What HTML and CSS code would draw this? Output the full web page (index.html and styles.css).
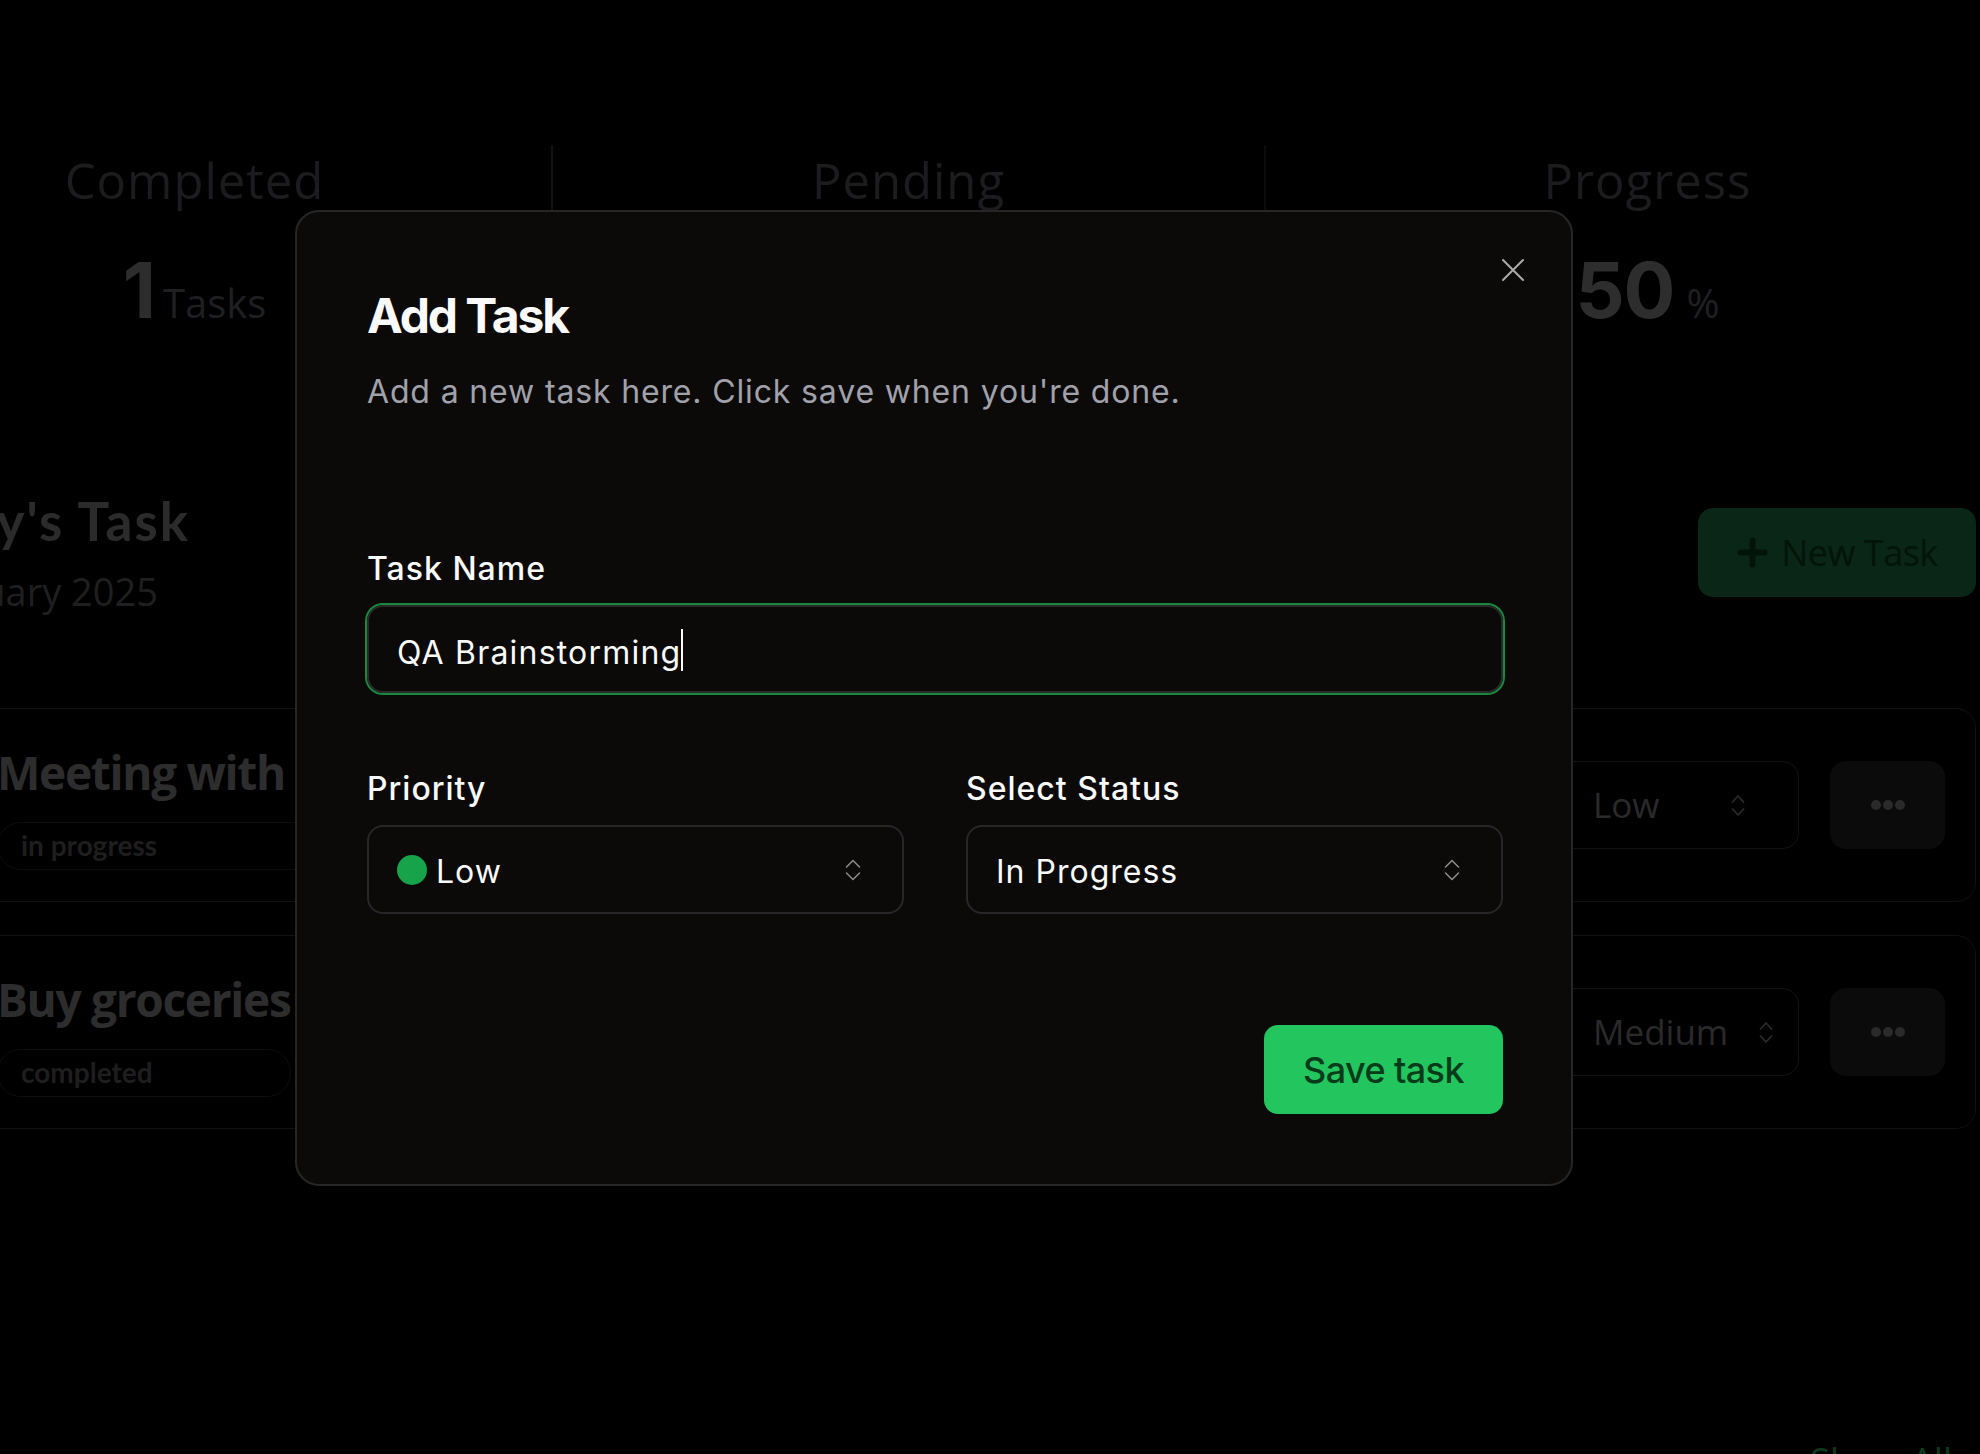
FILE: index.html
```html
<!DOCTYPE html>
<html lang="en">
<head>
<meta charset="utf-8">
<title>Tasks</title>
<link rel="stylesheet" href="styles.css">
</head>
<body>
<div class="page">
  <section class="stats">
    <div class="stat stat--first">
      <div class="stat-label">Completed</div>
      <div class="stat-value"><span class="stat-num">1</span><span class="stat-unit">Tasks</span></div>
    </div>
    <div class="stat stat--mid">
      <div class="stat-label">Pending</div>
      <div class="stat-value"><span class="stat-num">1</span><span class="stat-unit">Tasks</span></div>
    </div>
    <div class="stat stat--last">
      <div class="stat-label">Progress</div>
      <div class="stat-value stat-value--pct"><span class="stat-num">50</span><span class="stat-unit">%</span></div>
    </div>
  </section>

  <main class="main">
    <header class="tasks-header">
      <div class="tasks-heading">
        <h2 class="tasks-title">Today's Task</h2>
        <p class="tasks-date">Wednesday, 22 January 2025</p>
      </div>
      <button class="new-task" type="button">
        <svg class="plus" width="31" height="31" viewBox="0 0 31 31"><path d="M15.5 3.5v24M3.5 15.5h24" fill="none" stroke="currentColor" stroke-width="6" stroke-linecap="round"/></svg>
        <span>New Task</span>
      </button>
    </header>

    <ul class="task-list">
      <li class="task-card">
        <div class="task-info">
          <h3 class="task-name">Meeting with Team</h3>
          <span class="badge">in progress</span>
        </div>
        <div class="task-actions">
          <div class="prio-select"><span class="prio-text">Low</span>
            <svg width="14" height="23" viewBox="0 0 14 23"><path d="M1.5 8 7 2l5.5 6M1.5 15 7 21l5.5-6" fill="none" stroke="currentColor" stroke-width="1.8" stroke-linecap="round" stroke-linejoin="round"/></svg>
          </div>
          <button class="more" type="button"><svg width="34" height="10" viewBox="0 0 34 10"><circle cx="5" cy="5" r="5"/><circle cx="17" cy="5" r="5"/><circle cx="29" cy="5" r="5"/></svg></button>
        </div>
      </li>
      <li class="task-card">
        <div class="task-info">
          <h3 class="task-name">Buy groceries</h3>
          <span class="badge">completed</span>
        </div>
        <div class="task-actions">
          <div class="prio-select"><span class="prio-text">Medium</span>
            <svg width="14" height="23" viewBox="0 0 14 23"><path d="M1.5 8 7 2l5.5 6M1.5 15 7 21l5.5-6" fill="none" stroke="currentColor" stroke-width="1.8" stroke-linecap="round" stroke-linejoin="round"/></svg>
          </div>
          <button class="more" type="button"><svg width="34" height="10" viewBox="0 0 34 10"><circle cx="5" cy="5" r="5"/><circle cx="17" cy="5" r="5"/><circle cx="29" cy="5" r="5"/></svg></button>
        </div>
      </li>
    </ul>

    <div class="section-footer"><a class="show-all" href="#">Show All</a></div>
  </main>
</div>

<div class="dialog" role="dialog" aria-labelledby="dlg-title">
  <button class="dialog-close" type="button" aria-label="Close">
    <svg width="24" height="24" viewBox="0 0 24 24"><path d="M2 2l20 20M22 2 2 22" fill="none" stroke="currentColor" stroke-width="2" stroke-linecap="round"/></svg>
  </button>
  <h2 class="dialog-title" id="dlg-title">Add Task</h2>
  <p class="dialog-desc">Add a new task here. Click save when you're done.</p>

  <div class="dialog-form">
    <div class="field">
      <label class="field-label">Task Name</label>
      <div class="text-input"><span class="input-value">QA Brainstorming<span class="caret"></span></span></div>
    </div>

    <div class="field-row">
      <div class="field">
        <label class="field-label">Priority</label>
        <div class="select">
          <span class="dot"></span><span class="select-value">Low</span>
          <svg class="select-icon" width="18" height="26" viewBox="0 0 18 26"><path d="M2.5 10 9 3.5l6.5 6.5M2.5 16 9 22.5l6.5-6.5" fill="none" stroke="currentColor" stroke-width="1.6" stroke-linecap="round" stroke-linejoin="round"/></svg>
        </div>
      </div>
      <div class="field">
        <label class="field-label">Select Status</label>
        <div class="select">
          <span class="select-value">In Progress</span>
          <svg class="select-icon" width="18" height="26" viewBox="0 0 18 26"><path d="M2.5 10 9 3.5l6.5 6.5M2.5 16 9 22.5l6.5-6.5" fill="none" stroke="currentColor" stroke-width="1.6" stroke-linecap="round" stroke-linejoin="round"/></svg>
        </div>
      </div>
    </div>
  </div>

  <div class="dialog-footer">
    <button class="save-btn" type="button">Save task</button>
  </div>
</div>
</body>
</html>
```

FILE: styles.css
```css
html, body {
  margin: 0;
  padding: 0;
}
body {
  background: #000;
  width: 1980px;
  height: 1454px;
  overflow: hidden;
  font-family: "Open Sans", sans-serif;
}

/* ---------- background page (dimmed behind dialog) ---------- */
.stats {
  display: flex;
  margin: 145px 0 0 -162px;
  width: 2191px;
  height: 200px;
}
.stat {
  box-sizing: border-box;
  padding-top: 11px;
  text-align: center;
}
.stat--first { width: 713px; }
.stat--mid { width: 713px; border-left: 2px solid #121212; }
.stat--last { width: 765px; border-left: 2px solid #0c0c0c; }
.stat-label {
  font: 400 49px/49px "Open Sans", sans-serif;
  color: #1c1c1e;
  letter-spacing: 1px;
}
.stat-value {
  margin-top: 47px;
  display: flex;
  justify-content: center;
  align-items: baseline;
  gap: 8px;
}
.stat-value--pct { gap: 12px; }
.stat-num {
  font: 700 77px/77px "Inter", sans-serif;
  color: #2d2d2d;
  letter-spacing: -1px;
}
.stat-unit {
  font: 400 40px/40px "Open Sans", sans-serif;
  color: #1f1f21;
}

.main {
  margin-left: -38px;
  width: 2014px;
}
.tasks-header {
  margin-top: 150px;
  display: flex;
  justify-content: space-between;
  align-items: center;
}
.tasks-heading {
  width: 400px;
  margin-left: -172px;
  display: flex;
  flex-direction: column;
  align-items: flex-end;
}
.tasks-title {
  margin: 0;
  font: 700 53px/52px "Lato", sans-serif;
  letter-spacing: 2px;
  color: #2b2b2b;
  white-space: nowrap;
}
.tasks-date {
  margin: 25px 32px 0 0;
  font: 400 38px/38px "Open Sans", sans-serif;
  color: #1f1f1f;
  white-space: nowrap;
}
.new-task {
  box-sizing: border-box;
  width: 278px;
  height: 89px;
  border: 0;
  border-radius: 15px;
  background: #0a2617;
  color: #03140a;
  display: flex;
  align-items: center;
  justify-content: center;
  gap: 13px;
  padding: 0 0 0 1px;
  font: 500 36px/36px "Open Sans", sans-serif;
  letter-spacing: -0.5px;
}

.task-list {
  list-style: none;
  margin: 98px 0 0;
  padding: 0;
  display: flex;
  flex-direction: column;
  gap: 33px;
}
.task-card {
  box-sizing: border-box;
  height: 194px;
  border: 1px solid #111;
  border-radius: 20px;
  padding: 0 30px 0 34px;
  display: flex;
  justify-content: space-between;
  align-items: center;
}
.task-info {
  display: flex;
  flex-direction: column;
  padding: 40px 0 31px;
}
.task-name {
  margin: 0;
  font: 700 46px/46px "Open Sans", sans-serif;
  letter-spacing: -1.3px;
  color: #2d2d2d;
  white-space: nowrap;
}
.badge {
  box-sizing: border-box;
  margin-top: 27px;
  height: 48px;
  border: 1px solid #0d0d0d;
  border-radius: 24px;
  padding-left: 23px;
  font: 700 28px/44px "Lato", sans-serif;
  color: #1e1e1e;
}
.task-actions {
  display: flex;
  align-items: center;
  gap: 31px;
}
.prio-select {
  box-sizing: border-box;
  width: 240px;
  height: 88px;
  border: 1px solid #131313;
  border-radius: 16px;
  padding-left: 33px;
  display: flex;
  align-items: center;
  font: 500 35px/40px "Open Sans", sans-serif;
  color: #2a2a2a;
}
.prio-text {
  min-width: 107px;
  margin-right: 31px;
}
.more {
  width: 115px;
  height: 88px;
  border: 0;
  border-radius: 16px;
  background: #0b0b0b;
  color: #2a2a2a;
  display: flex;
  align-items: center;
  justify-content: center;
  padding: 0;
}
.more svg { fill: currentColor; }

.section-footer {
  margin-top: 314px;
  display: flex;
  justify-content: flex-end;
  padding-right: 24px;
}
.show-all {
  font: 500 36px/36px "Open Sans", sans-serif;
  color: #0b3a1c;
  text-decoration: none;
}

/* ---------- dialog ---------- */
.dialog {
  position: fixed;
  left: 295px;
  top: 210px;
  box-sizing: border-box;
  width: 1278px;
  height: 976px;
  background: #0b0a09;
  border: 2px solid #262626;
  border-radius: 24px;
  padding: 80px 68px 69px 70px;
  font-family: "Inter", sans-serif;
  color: #fafafa;
}
.dialog-close {
  position: absolute;
  top: 46px;
  right: 46px;
  width: 24px;
  height: 24px;
  padding: 0;
  border: 0;
  background: none;
  color: #ababab;
}
.dialog-close svg { display: block; }
.dialog-title {
  margin: 0;
  font: 700 48px/48px "Inter", sans-serif;
  letter-spacing: -2.1px;
  color: #fafafa;
}
.dialog-desc {
  margin: 28px 0 0;
  font: 400 32px/48px "Inter", sans-serif;
  letter-spacing: 0.85px;
  color: #a1a1aa;
}
.dialog-form {
  margin-top: 137px;
}
.field {
  display: flex;
  flex-direction: column;
}
.field-label {
  font: 500 32px/32px "Inter", sans-serif;
  letter-spacing: 1px;
  color: #fafafa;
  margin-bottom: 20px;
}
.text-input {
  box-sizing: border-box;
  height: 88px;
  border: 2px solid #2a2a2a;
  border-radius: 16px;
  box-shadow: 0 0 0 2px #188a3f;
  padding: 4px 28px 0;
  display: flex;
  align-items: center;
  font: 400 32px/42px "Inter", sans-serif;
  letter-spacing: 1.2px;
  color: #fafafa;
}
.caret {
  display: inline-block;
  width: 2px;
  height: 42px;
  margin-left: 0;
  background: #fafafa;
  vertical-align: -7px;
}
.field-row {
  margin-top: 80px;
  display: grid;
  grid-template-columns: 1fr 1fr;
  gap: 62px;
}
.select {
  box-sizing: border-box;
  height: 89px;
  border: 2px solid #27272a;
  border-radius: 16px;
  padding: 4px 40px 0 28px;
  display: flex;
  align-items: center;
  font: 400 32px/40px "Inter", sans-serif;
  letter-spacing: 1px;
  color: #fafafa;
}
.dot {
  width: 30px;
  height: 30px;
  border-radius: 50%;
  background: #16a34a;
  margin: -4px 9px 0 0;
  flex: none;
}
.select-value { flex: 1; }
.select-icon {
  color: #8a8a8a;
  margin-top: -4px;
  flex: none;
}
.dialog-footer {
  margin-top: 111px;
  display: flex;
  justify-content: flex-end;
}
.save-btn {
  box-sizing: border-box;
  width: 239px;
  height: 89px;
  border: 0;
  border-radius: 14px;
  background: #22c55e;
  color: #063b1a;
  font: 500 36px/36px "Inter", sans-serif;
  letter-spacing: -0.6px;
  padding: 0;
}
```
